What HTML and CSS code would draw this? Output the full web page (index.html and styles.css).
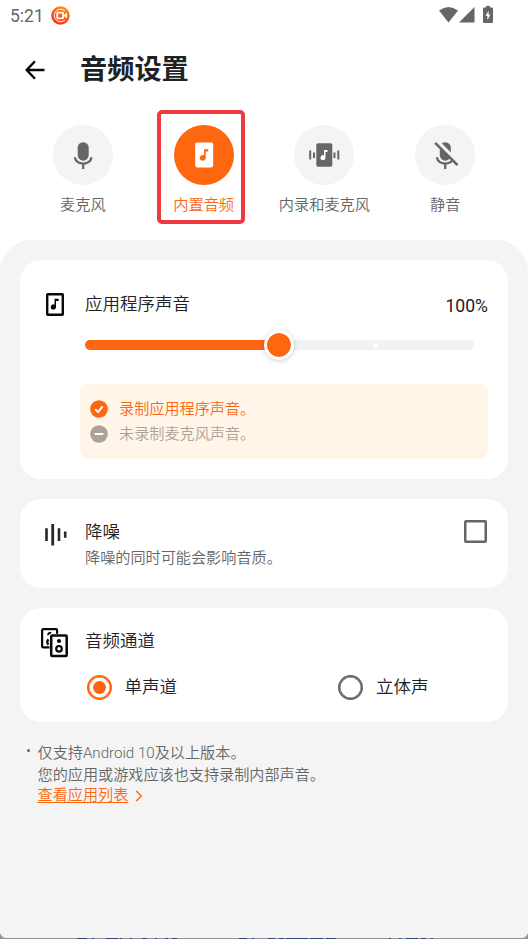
FILE: index.html
```html
<!DOCTYPE html>
<html lang="zh-CN">
<head>
<meta charset="utf-8">
<title>音频设置</title>
<link rel="stylesheet" href="styles.css">
</head>
<body>
<div class="screen">
  <div class="status">
    <span class="clock">5:21</span>
    <svg class="rec" width="19" height="19" viewBox="0 0 19 19">
      <defs><linearGradient id="g" x1=".8" y1="0" x2=".2" y2="1"><stop offset="0" stop-color="#ff9b08"/><stop offset=".5" stop-color="#ff5a12"/><stop offset="1" stop-color="#ff251b"/></linearGradient></defs>
      <circle cx="9.5" cy="9.5" r="9.3" fill="url(#g)"/>
      <path d="M13.8 4.8A6.3 6.3 0 1 0 13.8 14.2" fill="none" stroke="#fff" stroke-width="1"/>
      <rect x="6.2" y="6.6" width="6" height="5.8" rx=".8" fill="none" stroke="#fff" stroke-width="1.9"/>
      <path d="M12.5 9.5L16 6.5V12.5Z" fill="#fff"/>
    </svg>
    <div class="system">
      <svg width="19" height="16" viewBox="0 0 19 16"><path d="M0 3.6Q9.5-3.4 19 3.6L9.5 15.5Z" fill="#666"/></svg>
      <svg width="16" height="16" viewBox="0 0 16 16"><path d="M15.5 0V15.5H0Z" fill="#666"/></svg>
      <svg class="battery" width="10" height="17" viewBox="0 0 10 17"><path d="M3 0H7V1.4H9Q10 1.4 10 2.4V16Q10 17 9 17H1Q0 17 0 16V2.4Q0 1.4 1 1.4H3Z" fill="#666"/><path d="M5.6 4.8L2.5 10H4.4V14L7.5 8.8H5.6Z" fill="#fff"/></svg>
    </div>
  </div>
  <header class="header">
    <svg width="20" height="20" viewBox="0 0 20 20"><path d="M19.5 10H2M10 1.2L1.7 10L10 18.8" fill="none" stroke="#080808" stroke-width="2.4"/></svg>
    <h1>音频设置</h1>
  </header>
  <nav class="tabs">
    <div class="tab">
      <div class="disc"><svg width="60" height="60" viewBox="0 0 60 60"><rect x="24.7" y="17.2" width="11" height="18.5" rx="5.4" fill="#666"/><path d="M21.8 32.3C23.2 40.7 37.2 40.7 38.6 32.3M30.2 38V44" fill="none" stroke="#666" stroke-width="2.3"/></svg></div>
      <span>麦克风</span>
    </div>
    <div class="tab active">
      <div class="disc"><svg width="60" height="60" viewBox="0 0 60 60"><rect x="21.2" y="17.4" width="18" height="25" rx="1.8" fill="#fff"/><path d="M30 24.2H34.2V26.5H31.7V33A3 2.9 0 1 1 30 30.2Z" fill="#ff6610"/></svg></div>
      <span>内置音频</span>
    </div>
    <div class="tab">
      <div class="disc"><svg width="60" height="60" viewBox="0 0 60 60"><rect x="22.3" y="18.3" width="16" height="23.5" rx="1.8" fill="#666"/><path d="M30 25H33.5V27.1H31.5V32.8A2.5 2.5 0 1 1 30 30.4Z" fill="#fff"/><path d="M16.2 25.6V34.5M20 27.4V33M40.5 27.4V33M44.3 25.6V34.5" stroke="#666" stroke-width="2"/></svg></div>
      <span>内录和麦克风</span>
    </div>
    <div class="tab">
      <div class="disc"><svg width="60" height="60" viewBox="0 0 60 60"><rect x="24.8" y="17.2" width="11" height="18.5" rx="5.4" fill="#666"/><path d="M21.8 32.3C23.2 40.7 37.2 40.7 38.6 32.3M30.2 38V44" fill="none" stroke="#666" stroke-width="2.3"/><path d="M22 16.5L44.5 39" stroke="#f4f4f4" stroke-width="4"/><path d="M20.2 17.8L42.5 40.2" stroke="#666" stroke-width="2.6"/></svg></div>
      <span>静音</span>
    </div>
  </nav>
  <main class="panel">
    <section class="card volume">
      <div class="row">
        <svg class="note" width="18" height="23" viewBox="0 0 18 23"><rect x="1.2" y="1.2" width="15.6" height="20.6" rx=".6" fill="none" stroke="#080808" stroke-width="2.4"/><path d="M8.5 5.7H12.7V7.9H10V14.3A2.6 2.6 0 1 1 8.5 11.7Z" fill="#080808"/></svg>
        <h2>应用程序声音</h2>
        <span class="percent">100%</span>
      </div>
      <div class="slider"><div class="fill"></div><div class="thumb"></div><div class="tick"></div></div>
      <div class="notice">
        <div class="line on"><svg width="18" height="18" viewBox="0 0 18 18"><circle cx="9" cy="9" r="8.8" fill="#ff6610"/><path d="M5.2 9.3L8 12L12.6 6.3" fill="none" stroke="#fff" stroke-width="1.9"/></svg><span>录制应用程序声音。</span></div>
        <div class="line"><svg width="18" height="18" viewBox="0 0 18 18"><circle cx="9" cy="9" r="8.8" fill="#aca297"/><path d="M4.6 9H13.4" stroke="#fff" stroke-width="2"/></svg><span>未录制麦克风声音。</span></div>
      </div>
    </section>
    <section class="card noise">
      <svg width="22" height="22" viewBox="0 0 22 22"><path d="M1.5 4.3V17M14 4.3V17M20.2 7.5V13.7" stroke="#282828" stroke-width="2.6"/><path d="M7.7 0V21.5" stroke="#282828" stroke-width="2.8"/></svg>
      <div class="copy"><h2>降噪</h2><p>降噪的同时可能会影响音质。</p></div>
      <span class="checkbox"></span>
    </section>
    <section class="card channel">
      <div class="row">
        <svg width="27" height="30" viewBox="0 0 27 30"><rect x="1.1" y="1.2" width="15" height="18.2" rx="1.2" fill="#fff" stroke="#080808" stroke-width="2.2"/><path d="M7.2 7.2A2 2 0 0 1 10 5.2M7.5 11.3A3.6 3.6 0 0 0 7.5 16.7" fill="none" stroke="#080808" stroke-width="2.3"/><rect x="8.5" y="5.8" width="18.5" height="24" fill="#fff"/><rect x="10.2" y="7.4" width="15.5" height="20.5" rx="1" fill="none" stroke="#080808" stroke-width="2.5"/><circle cx="18" cy="13" r="2.1" fill="#080808"/><circle cx="18" cy="20.8" r="2.8" fill="none" stroke="#080808" stroke-width="2.2"/></svg>
        <h2>音频通道</h2>
      </div>
      <div class="options">
        <div class="option selected"><span class="radio"></span><span>单声道</span></div>
        <div class="option"><span class="radio"></span><span>立体声</span></div>
      </div>
    </section>
    <footer class="hint">
      <span class="bullet"></span>
      <div class="hint-copy">
        <p>仅支持Android 10及以上版本。</p>
        <p>您的应用或游戏应该也支持录制内部声音。</p>
        <div class="more"><a>查看应用列表</a><svg width="8" height="12" viewBox="0 0 8 12"><path d="M1.2 1L6.3 6L1.2 11" fill="none" stroke="#ff6610" stroke-width="1.4"/></svg></div>
      </div>
    </footer>
  </main>
</div>
<svg class="edge" width="528" height="1" viewBox="0 0 528 1"><path d="M77 .5H87M92 .5H94M106 .5H118M120 .5H122M130 .5H132M142 .5H147M155 .5H157M165 .5H168M172 .5H177M239 .5H247M252 .5H254M268 .5H275M279 .5H284M286 .5H308M310 .5H323M326 .5H336M389 .5H391M399 .5H401M406 .5H418M421 .5H426M431 .5H433" stroke="#304878"/></svg>
</body>
</html>
```
FILE: styles.css
```css
*, *::before, *::after { box-sizing: border-box; }
body { margin: 0; background: #9099a8; font-family: Roboto, "Noto Sans CJK SC", sans-serif; font-weight: 350; color: #202124; }
h1, h2, p { margin: 0; }
svg { display: block; flex: none; }
.screen { height: 938px; display: flex; flex-direction: column; background: #fff; border-radius: 0 0 7px 7px; overflow: hidden; }
.edge { background: #929299; }
.status { height: 32px; padding: 5px 35px 0 10px; display: flex; align-items: flex-start; }
.clock { width: 40.5px; font-size: 17.5px; line-height: 22px; font-weight: 400; color: #666; }
.rec { margin-top: 1px; }
.system { margin: 2px 0 0 auto; display: flex; gap: 1px; }
.battery { margin: -1px 0 0 7px; }
.header { height: 74px; padding-left: 25px; display: flex; align-items: center; gap: 35px; }
.header svg { margin-top: 1px; }
h1 { font-size: 27.2px; line-height: 36px; font-weight: 700; margin-top: 2px; }
.tabs { height: 134px; padding: 19px 22.5px 0; display: grid; grid-template-columns: repeat(4, 1fr); }
.tab { position: relative; display: flex; flex-direction: column; align-items: center; font-size: 15.2px; line-height: 20px; color: #666; white-space: nowrap; }
.disc { width: 60px; height: 60px; border-radius: 50%; background: #f4f4f4; margin-bottom: 10px; }
.active { color: #ff6610; }
.active .disc { background: #ff6610; }
.active::after { content: ""; position: absolute; left: 13.5px; top: -15px; width: 88px; height: 114px; border: 4px solid #f13a40; border-radius: 5px; }
.panel { flex: 1; background: #f4f4f4; border-radius: 32px 32px 0 0; padding: 20px; display: flex; flex-direction: column; gap: 20px; }
.card { background: #fff; border-radius: 21px; flex: none; }
h2 { font-size: 17.5px; line-height: 24px; font-weight: 350; }
.volume { height: 219px; padding: 32px 20px 0; }
.row { display: flex; align-items: flex-start; }
.note { margin: 1px 21px 0 6px; }
.percent { margin: 2px 0 0 auto; font-size: 17.6px; line-height: 24px; font-weight: 400; }
.slider { position: relative; margin: 22px 14.5px 0 44.5px; height: 10px; border-radius: 5px; background: #f1f2f4; }
.fill { width: 50%; height: 100%; border-radius: 5px; background: #ff6610; }
.thumb { position: absolute; left: 179px; top: -10px; width: 30px; height: 30px; border-radius: 50%; border: 3.5px solid #fff; background: #ff6610; background-clip: padding-box; box-shadow: 0 1px 5px #0003; }
.tick { position: absolute; left: 288.5px; top: 2.5px; width: 5px; height: 5px; border-radius: 50%; background: #fff; }
.notice { margin: 34px 0 0 40px; height: 75px; padding: 12px 10px; border-radius: 9px; background: #fff6e9; }
.line { height: 25px; display: flex; align-items: center; gap: 11px; font-size: 15.15px; line-height: 22px; color: #aca297; }
.line span { margin-top: 1px; }
.on { color: #ff6610; }
.noise { height: 89px; padding: 21px 20px 0 25px; display: flex; }
.noise > svg { margin: 4px 18px 0 0; }
.copy { flex: 1; }
.copy p { font-size: 15.15px; line-height: 22px; color: #666; margin-top: 3px; }
.checkbox { width: 23px; height: 23px; margin: 0 1px 0 0; border: 2px solid #666; border-radius: 2px; box-shadow: inset 0 0 0 .5px #666; }
.channel { height: 114px; padding: 20px 20px 0; }
.channel .row { gap: 17px; padding-left: 1px; height: 46px; }
.channel h2 { margin-top: 1px; }
.options { display: grid; grid-template-columns: 251.5px 1fr; padding-left: 46.5px; }
.option { display: flex; align-items: center; height: 26px; gap: 13px; font-size: 17.5px; line-height: 26px; }
.radio { width: 25px; height: 25px; border: 2px solid #666; border-radius: 50%; display: grid; place-items: center; box-shadow: inset 0 0 0 .5px #666; }
.selected .radio { border-color: #ff6610; box-shadow: inset 0 0 0 .5px #ff6610; }
.selected .radio::after { content: ""; width: 13px; height: 13px; border-radius: 50%; background: #ff6610; }
.hint { display: flex; padding: 1px 0 0 7px; font-size: 15.15px; line-height: 21.5px; color: #666; }
.hint p { letter-spacing: -.01px; }
.bullet { width: 3px; height: 3px; border-radius: 50%; background: #666; margin: 6px 7.5px 0 0; }
.more { display: flex; align-items: center; gap: 7px; height: 19px; color: #ff6610; }
.more a { text-decoration: underline; text-underline-offset: 2px; }
```
